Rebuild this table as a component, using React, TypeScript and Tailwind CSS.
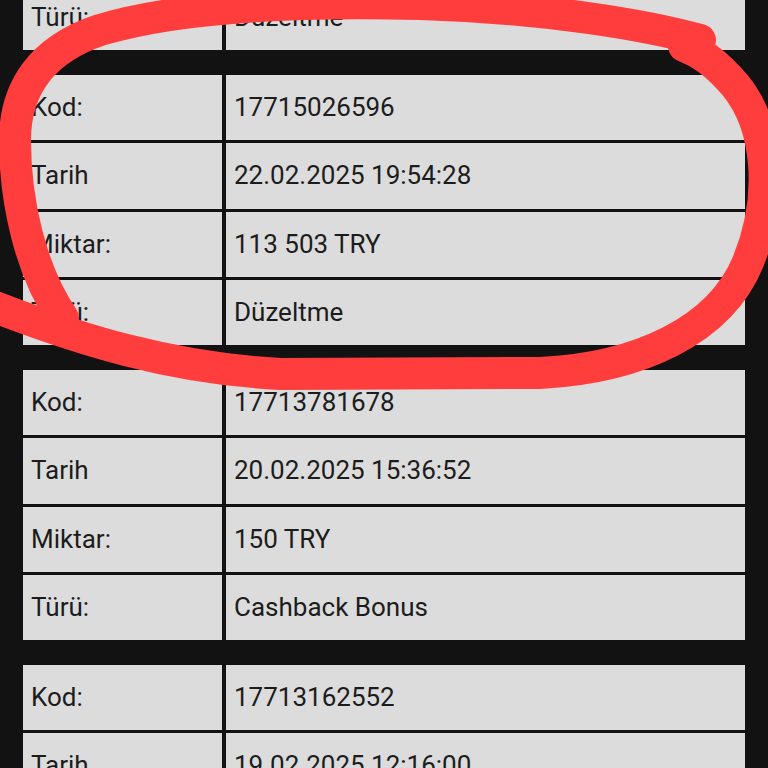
import React from "react"

type Row = { label: string; value: string }

const groups: Row[][] = [
    [{ label: "Türü:", value: "Düzeltme" }],
    [
        { label: "Kod:", value: "17715026596" },
        { label: "Tarih", value: "22.02.2025 19:54:28" },
        { label: "Miktar:", value: "113 503 TRY" },
        { label: "Türü:", value: "Düzeltme" },
    ],
    [
        { label: "Kod:", value: "17713781678" },
        { label: "Tarih", value: "20.02.2025 15:36:52" },
        { label: "Miktar:", value: "150 TRY" },
        { label: "Türü:", value: "Cashback Bonus" },
    ],
    [
        { label: "Kod:", value: "17713162552" },
        { label: "Tarih", value: "19.02.2025 12:16:00" },
    ],
]

function Group({ rows }: { rows: Row[] }) {
    return (
        <div className="grid grid-cols-[199px_1fr] gap-x-[4px] gap-y-[3px]">
            {rows.map((r, i) => (
                <React.Fragment key={i}>
                    <div className="h-[65.25px] bg-[#dcdcdc] flex items-center pl-[8px]">{r.label}</div>
                    <div className="h-[65.25px] bg-[#dcdcdc] flex items-center pl-[8px]">{r.value}</div>
                </React.Fragment>
            ))}
        </div>
    )
}

export default function App() {
    return (
        <div className="relative w-[768px] h-[768px] overflow-hidden bg-[#121212] font-['Roboto',sans-serif] text-[26px] text-[#1c1c1c]">
            <div className="px-[23px] -mt-[15.25px] flex flex-col gap-[25px]">
                {groups.map((g, i) => (
                    <Group key={i} rows={g} />
                ))}
            </div>

            {/* hand drawn marker circle */}
            <svg className="absolute left-0 top-0 pointer-events-none" width="768" height="420" viewBox="0 0 768 420">
                <g fill="none" stroke="#ff3d3d" strokeWidth="32" strokeLinecap="round" strokeLinejoin="round">
                    <path d="M 700 40 C 650 26, 550 8, 420 4 C 300 1, 180 6, 100 30 C 40 50, 15 90, 15 140 C 15 200, 30 270, 63 318" />
                    <path d="M -10 305 C 80 340, 170 368, 280 374 L 540 373 C 640 368, 720 330, 748 262 C 775 195, 768 125, 735 85 C 715 62, 700 52, 684 46" />
                </g>
            </svg>
        </div>
    )
}
